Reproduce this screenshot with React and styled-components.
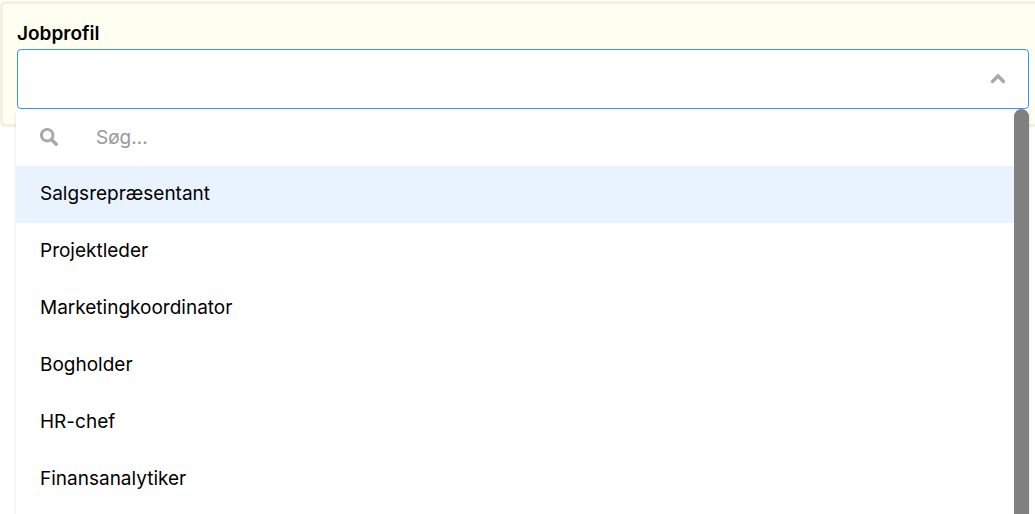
import React, { useState } from 'react';
import styled, { createGlobalStyle } from 'styled-components';

const GlobalStyle = createGlobalStyle`
  * {
    box-sizing: border-box;
  }

  body {
    margin: 0;
    padding-top: 1px;
    height: 100vh;
    overflow: hidden;
    background-color: #ffffff;
    color: #000000;
    font-family: Inter, "Liberation Sans", sans-serif;
    font-size: 19px;
  }
`;

const Panel = styled.section`
  padding: 15px 6px 15px 14px;
  border: 3px solid #f1f2e4;
  border-right: none;
  border-radius: 6px 0 0 6px;
  background-color: #fffff1;
`;

const Label = styled.label`
  display: block;
  height: 30px;
  line-height: 29px;
  font-weight: 600;
`;

const SelectBox = styled.div`
  position: relative;
`;

const Field = styled.button`
  display: flex;
  align-items: center;
  justify-content: flex-end;
  width: 100%;
  height: 60px;
  padding: 0 22px;
  border: 1px solid #3994f3;
  border-radius: 4px;
  outline: none;
  background-color: #ffffff;
  color: #a9a9a9;
  cursor: pointer;
`;

const Dropdown = styled.div`
  position: absolute;
  top: 100%;
  left: -1px;
  right: 0;
  display: flex;
  border-radius: 4px;
  background-color: #ffffff;
  box-shadow: 0 2px 3px rgba(0, 0, 0, 0.14);
`;

const Content = styled.div`
  flex: 1;
  padding-bottom: 24px;
`;

const ScrollThumb = styled.div`
  width: 15px;
  border-radius: 8px;
  background-color: #808080;
`;

const SearchRow = styled.label`
  display: flex;
  align-items: center;
  gap: 38px;
  height: 57px;
  padding: 0 24px 1px;
  color: #a9a9a9;
`;

const SearchInput = styled.input`
  flex: 1;
  padding: 0;
  border: none;
  outline: none;
  background: transparent;
  color: #000000;
  font: inherit;

  &::placeholder {
    color: #999999;
    opacity: 1;
  }
`;

const Options = styled.ul`
  margin: 0;
  padding: 0;
  list-style: none;
`;

const Option = styled.li`
  height: 57px;
  padding: 0 24px;
  line-height: 55px;
  background-color: ${({ $active }) => ($active ? '#e9f3fe' : '#ffffff')};
  cursor: pointer;
`;

const jobs = [
  'Salgsrepræsentant',
  'Projektleder',
  'Marketingkoordinator',
  'Bogholder',
  'HR-chef',
  'Finansanalytiker',
];

function ChevronUp() {
  return (
    <svg width="16" height="12" viewBox="0 0 16 12" fill="none" aria-hidden="true">
      <path d="M2.5 8.5 8 3l5.5 5.5" stroke="currentColor" strokeWidth="3.4" strokeLinecap="round" />
    </svg>
  );
}

function SearchIcon() {
  return (
    <svg width="18" height="18" viewBox="0 0 18 18" fill="none" stroke="currentColor" aria-hidden="true">
      <circle cx="7.2" cy="7.2" r="5.8" strokeWidth="2.9" />
      <path d="m11.5 11.5 4.7 4.7" strokeWidth="3.4" strokeLinecap="round" />
    </svg>
  );
}

export default function App() {
  const [active, setActive] = useState(0);
  const [search, setSearch] = useState('');

  const visible = jobs.filter((job) => job.toLowerCase().includes(search.toLowerCase()));

  return (
    <>
      <GlobalStyle />
      <Panel>
        <Label htmlFor="jobprofil">Jobprofil</Label>
        <SelectBox>
          <Field id="jobprofil" type="button" aria-haspopup="listbox" aria-expanded="true">
            <ChevronUp />
          </Field>
          <Dropdown>
            <Content>
              <SearchRow>
                <SearchIcon />
                <SearchInput
                  type="text"
                  placeholder="Søg..."
                  aria-label="Søg"
                  value={search}
                  onChange={(e) => setSearch(e.target.value)}
                />
              </SearchRow>
              <Options role="listbox">
                {visible.map((job, index) => (
                  <Option
                    key={job}
                    role="option"
                    aria-selected={index === active}
                    $active={index === active}
                    onMouseEnter={() => setActive(index)}
                  >
                    {job}
                  </Option>
                ))}
              </Options>
            </Content>
            <ScrollThumb />
          </Dropdown>
        </SelectBox>
      </Panel>
    </>
  );
}
